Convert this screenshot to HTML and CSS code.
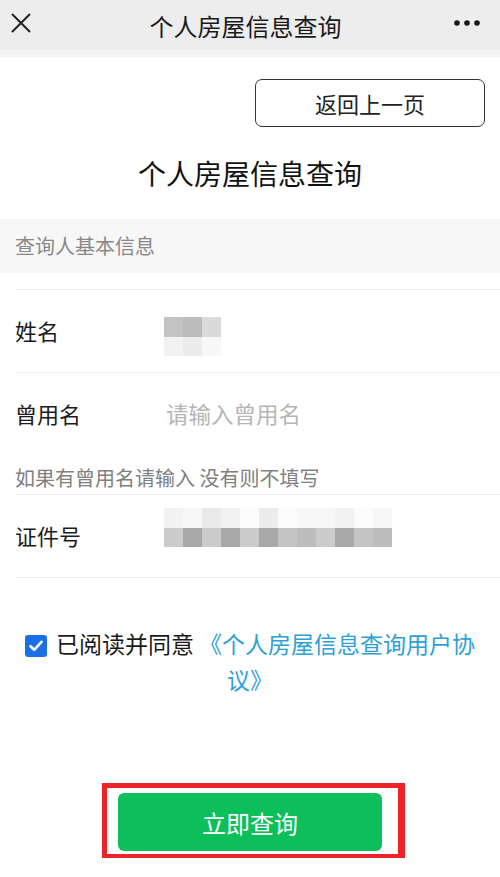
FILE: index.html
```html
<!DOCTYPE html>
<html lang="zh-CN">
<head>
    <meta charset="UTF-8">
    <meta name="viewport" content="width=device-width, initial-scale=1.0">
    <title>个人房屋信息查询</title>
    <link rel="stylesheet" href="styles.css">
</head>
<body>
    <header class="topbar">
        <span class="topbar-close">
            <svg width="20" height="20" viewBox="0 0 20 20"><path d="M1 1L19 19M19 1L1 19" stroke="#222" stroke-width="2" fill="none"/></svg>
        </span>
        <span class="topbar-title">个人房屋信息查询</span>
        <span class="topbar-more">
            <svg width="26" height="6" viewBox="0 0 26 6"><circle cx="3" cy="3" r="2.8" fill="#1a1a1a"/><circle cx="13" cy="3" r="2.8" fill="#1a1a1a"/><circle cx="23" cy="3" r="2.8" fill="#1a1a1a"/></svg>
        </span>
    </header>

    <div class="back-row">
        <button class="back-btn">返回上一页</button>
    </div>

    <h1 class="page-title">个人房屋信息查询</h1>

    <div class="section-head">查询人基本信息</div>

    <div class="form">
        <div class="form-row first">
            <div class="form-line">
                <label class="form-label">姓名</label>
                <div class="mosaic mosaic-name">
                    <span class="g3"></span><span class="g2"></span><span class="g5"></span>
                    <span class="w2"></span><span class="w3"></span><span class="w1"></span>
                </div>
            </div>
        </div>
        <div class="form-row">
            <div class="form-line">
                <label class="form-label" for="alias">曾用名</label>
                <input class="form-input" id="alias" type="text" placeholder="请输入曾用名">
            </div>
            <p class="form-hint">如果有曾用名请输入 没有则不填写</p>
        </div>
        <div class="form-row">
            <div class="form-line">
                <label class="form-label">证件号</label>
                <div class="mosaic mosaic-id">
                    <span class="w2"></span><span class="w1"></span><span class="w4"></span><span class="w2"></span>
                    <span class="w0"></span><span class="w3"></span><span class="w0"></span><span class="w1"></span>
                    <span class="w1"></span><span class="w2"></span><span class="w0"></span><span class="w1"></span>
                    <span class="g4"></span><span class="g1"></span><span class="g4"></span><span class="g1"></span>
                    <span class="g4"></span><span class="g1"></span><span class="g3"></span><span class="g2"></span>
                    <span class="g4"></span><span class="g1"></span><span class="g3"></span><span class="g2"></span>
                </div>
            </div>
        </div>
    </div>

    <div class="agree">
        <span class="agree-nowrap"><span class="agree-box">
            <svg width="14" height="12" viewBox="0 0 14 12"><path d="M1.5 6.2L5.2 9.8L12.5 1.8" stroke="#fff" stroke-width="2.6" fill="none" stroke-linecap="round" stroke-linejoin="round"/></svg>
        </span>已阅读并同意 <a class="agree-link" href="#">《个人房屋信息查询用户协</a></span><wbr><a class="agree-link agree-nowrap" href="#">议》</a>
    </div>

    <div class="submit-wrap">
        <div class="mark">
            <button class="submit-btn">立即查询</button>
        </div>
    </div>
</body>
</html>
```

FILE: styles.css
```css
* {
    box-sizing: border-box;
}
body {
    margin: 0;
    width: 500px;
    background: #fff;
    font-family: "Noto Sans CJK SC", "Noto Sans", sans-serif;
    color: #1a1a1a;
}
.topbar {
    height: 57px;
    background: #ededed;
    border-bottom: 7px solid #f4f4f4;
    display: flex;
    align-items: center;
    justify-content: space-between;
    padding: 0 20px 0 11px;
}
.topbar-close, .topbar-more {
    display: flex;
    width: 26px;
    margin-bottom: 4px;
}
.topbar-more {
    justify-content: flex-end;
}
.topbar-title {
    font-size: 24px;
    color: #1a1a1a;
}
.back-row {
    display: flex;
    justify-content: flex-end;
    padding: 22px 15px 0;
}
.back-btn {
    width: 230px;
    height: 48px;
    background: #fff;
    border: 1.5px solid #333;
    border-radius: 7px;
    font-family: inherit;
    font-size: 22px;
    color: #222;
    cursor: pointer;
}
.page-title {
    margin: 26px 0 0;
    font-size: 28px;
    line-height: 40px;
    font-weight: normal;
    text-align: center;
    color: #111;
}
.section-head {
    margin-top: 26px;
    height: 54px;
    line-height: 54px;
    padding-left: 15px;
    background: #f7f7f7;
    font-size: 20px;
    color: #888;
}
.form {
    margin-top: 16px;
    padding-left: 15px;
}
.form-row {
    border-bottom: 1px solid #ebebeb;
}
.form-row.first {
    border-top: 1px solid #ebebeb;
}
.form-line {
    display: flex;
    align-items: center;
    height: 82px;
}
.form-label {
    width: 149px;
    margin-top: -3px;
    font-size: 22px;
    color: #1a1a1a;
}
.form-input {
    flex: 1;
    border: none;
    outline: none;
    margin-top: -3px;
    padding: 0 0 0 2px;
    font-family: inherit;
    font-size: 22.5px;
    color: #1a1a1a;
    background: transparent;
}
.form-input::placeholder {
    color: #b5b5b5;
}
.form-hint {
    margin: 0;
    padding: 9px 0 0;
    height: 39px;
    line-height: 28px;
    font-size: 20px;
    color: #808080;
}
.mosaic {
    display: grid;
    grid-auto-rows: 19.5px;
    align-self: flex-start;
}
.mosaic-name {
    grid-template-columns: repeat(3, 19px);
    margin-top: 27px;
}
.mosaic-id {
    grid-template-columns: repeat(12, 19px);
    margin-top: 13px;
}
.g1 { background: #a9a9a9; }
.g2 { background: #bcbcbc; }
.g3 { background: #c4c4c4; }
.g4 { background: #cbcbcb; }
.g5 { background: #dadada; }
.w0 { background: #fbfbfb; }
.w1 { background: #f7f7f7; }
.w2 { background: #f2f2f2; }
.w3 { background: #ececec; }
.w4 { background: #e9e9e9; }
.agree {
    margin-top: 47px;
    padding: 0 15px;
    text-align: center;
    font-size: 23px;
    line-height: 36px;
    color: #1a1a1a;
}
.agree-nowrap {
    white-space: nowrap;
}
.agree-box {
    display: inline-flex;
    align-items: center;
    justify-content: center;
    width: 22px;
    height: 22px;
    margin-right: 9px;
    vertical-align: 1px;
    border-radius: 3px;
    background: #1b6fe6;
}
.agree-link {
    color: #2e9fd6;
    text-decoration: none;
}
.submit-wrap {
    margin-top: 86px;
    padding-left: 102px;
}
.mark {
    display: inline-block;
    border: 5px solid #ec2427;
    border-bottom-width: 4px;
    border-right-width: 7px;
    padding: 5px 16px 3px 11px;
}
.submit-btn {
    display: block;
    width: 264px;
    height: 58px;
    border: none;
    border-radius: 6px;
    background: #0cbf5b;
    font-family: inherit;
    font-size: 24px;
    color: #fff;
    cursor: pointer;
}
```
